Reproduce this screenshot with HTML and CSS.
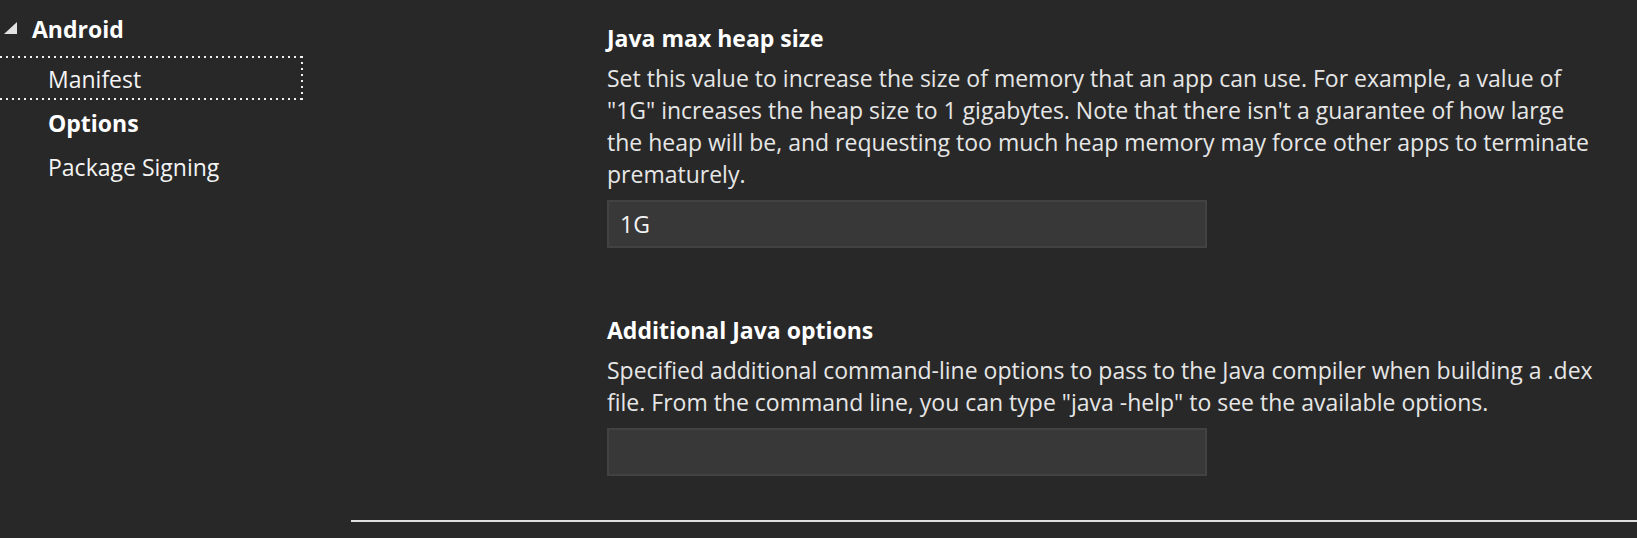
FILE: index.html
```html
<!DOCTYPE html>
<html lang="en">
<head>
<meta charset="utf-8">
<title>Android Options</title>
<link rel="stylesheet" href="styles.css">
</head>
<body>
<div class="page">
  <nav class="sidebar">
    <div class="tree-root">
      <svg class="expander" width="13" height="12" viewBox="0 0 13 12" aria-hidden="true"><polygon points="0,12 13,12 13,0" fill="#e2e2e2"/></svg>
      <span class="tree-root-label">Android</span>
    </div>
    <ul class="tree-children">
      <li class="tree-item focused">Manifest</li>
      <li class="tree-item selected">Options</li>
      <li class="tree-item">Package Signing</li>
    </ul>
  </nav>
  <main class="content">
    <div class="form">
      <section class="field">
        <h2 class="field-title">Java max heap size</h2>
        <p class="field-desc">Set this value to increase the size of memory that an app can use. For example, a value of<br>"1G" increases the heap size to 1 gigabytes. Note that there isn't a guarantee of how large<br>the heap will be, and requesting too much heap memory may force other apps to terminate<br>prematurely.</p>
        <div class="text-input">1G</div>
      </section>
      <section class="field">
        <h2 class="field-title">Additional Java options</h2>
        <p class="field-desc">Specified additional command-line options to pass to the Java compiler when building a .dex<br>file. From the command line, you can type "java -help" to see the available options.</p>
        <div class="text-input"></div>
      </section>
    </div>
    <div class="divider"></div>
  </main>
</div>
</body>
</html>
```
FILE: styles.css
```css
* { box-sizing: border-box; }
html, body {
  margin: 0;
  padding: 0;
  background: #282828;
}
body {
  width: 1637px;
  height: 538px;
  overflow: hidden;
  font-family: "Open Sans", "Noto Sans", sans-serif;
  font-size: 23px;
  color: #f0f0f0;
}
.page {
  display: flex;
  height: 538px;
}
.sidebar {
  width: 351px;
  flex: none;
  padding-top: 8px;
}
.tree-root {
  display: flex;
  align-items: center;
  height: 42px;
  padding-left: 4px;
  gap: 15px;
  margin-bottom: 6px;
}
.expander {
  flex: none;
  align-self: flex-start;
  margin-top: 14px;
}
.tree-root-label {
  font-weight: 700;
  color: #ffffff;
  line-height: 32px;
}
.tree-children {
  list-style: none;
  margin: 0;
  padding: 0;
}
.tree-item {
  display: flex;
  align-items: center;
  height: 44px;
  padding-left: 48px;
  padding-top: 2px;
  width: 303px;
  line-height: 32px;
  color: #f4f4f4;
}
.tree-item.focused {
  padding-top: 1px;
  background:
    repeating-linear-gradient(90deg, #f2f2f2 0 2px, transparent 2px 6px) left top / 100% 2px no-repeat,
    repeating-linear-gradient(90deg, #f2f2f2 0 2px, transparent 2px 6px) left bottom / 100% 2px no-repeat,
    repeating-linear-gradient(180deg, #f2f2f2 0 2px, transparent 2px 6px) right top / 2px 100% no-repeat;
}
.tree-item.selected {
  font-weight: 700;
  color: #ffffff;
}
.content {
  flex: 1;
  display: flex;
  flex-direction: column;
}
.form {
  padding: 22px 0 0 256px;
  display: flex;
  flex-direction: column;
  gap: 66px;
}
.field-title {
  margin: 0;
  font-size: 23px;
  font-weight: 700;
  line-height: 32px;
  color: #ffffff;
}
.field-desc {
  margin: 8px 0 0;
  line-height: 32px;
  color: #e6e6e6;
  white-space: nowrap;
}
.text-input {
  margin-top: 10px;
  width: 600px;
  height: 48px;
  background: #383838;
  border: 2px solid #424242;
  padding-left: 11px;
  line-height: 44px;
  color: #f4f4f4;
}
.divider {
  margin-top: 44px;
  height: 2px;
  background: #e0e0e0;
}
```
